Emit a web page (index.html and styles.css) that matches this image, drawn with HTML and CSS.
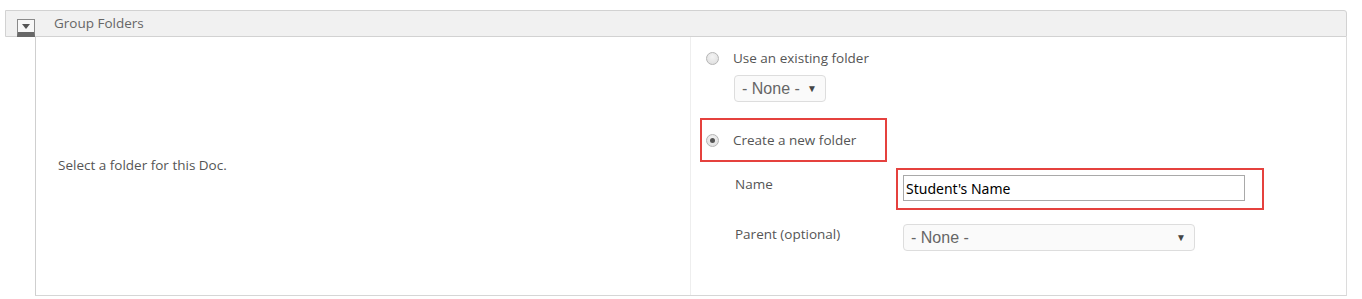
FILE: index.html
```html
<!DOCTYPE html>
<html lang="en">
<head>
    <meta charset="UTF-8">
    <title>Group Folders</title>
    <link rel="stylesheet" href="styles.css">
</head>
<body>
    <div class="panel">
        <div class="panel-head">
            <span class="toggle"><span class="arrow"></span></span>
            Group Folders
        </div>
        <div class="panel-body">
            <div class="field-label">Select a folder for this Doc.</div>
            <div class="field-options">
                <label class="option">
                    <span class="radio"></span>
                    Use an existing folder
                </label>
                <div class="select small">- None - <span class="caret">&#9660;</span></div>

                <label class="option marked">
                    <span class="radio checked"></span>
                    Create a new folder
                </label>

                <div class="new-folder">
                    <div class="sub-label name-label">Name</div>
                    <div class="marked-input">
                        <input type="text" class="text-input" value="Student's Name">
                    </div>
                    <div class="sub-label parent-label">Parent (optional)</div>
                    <div class="select wide">- None - <span class="caret">&#9660;</span></div>
                </div>
            </div>
        </div>
    </div>
</body>
</html>
```

FILE: styles.css
```css
body {
    margin: 0;
    padding: 10px 0 0 5px;
    font-family: 'Open Sans', sans-serif;
    font-size: 13.5px;
    color: #555;
    background-color: white;
}
.panel {
    width: 1342px;
}
.panel-head {
    position: relative;
    height: 25px;
    line-height: 25px;
    padding-left: 48px;
    background-color: #f1f1f1;
    border: 1px solid #d2d2d2;
    border-radius: 0 3px 0 0;
    color: #666;
}
.toggle {
    position: absolute;
    left: 11px;
    top: 8px;
    width: 16px;
    height: 12px;
    background-color: #f8f8f8;
    border: 1px solid #8a8a8a;
    border-bottom: 5px solid #686868;
    display: flex;
    align-items: center;
    justify-content: center;
}
.arrow {
    width: 0;
    height: 0;
    border-left: 4px solid transparent;
    border-right: 4px solid transparent;
    border-top: 5px solid #555;
    margin-top: 1px;
}
.panel-body {
    margin-left: 30px;
    height: 258px;
    border-left: 1px solid #cfcfcf;
    border-right: 1px solid #dcdcdc;
    border-bottom: 1px solid #d6d6d6;
    display: grid;
    grid-template-columns: 654px 1fr;
}
.field-label {
    display: flex;
    align-items: center;
    padding-left: 22px;
    padding-bottom: 3px;
}
.field-options {
    border-left: 1px solid #eeeeee;
    padding: 12px 0 0 15px;
}
.option {
    display: flex;
    align-items: center;
    height: 18px;
    gap: 14px;
}
.radio {
    width: 11px;
    height: 11px;
    border-radius: 50%;
    border: 1px solid #b5b5b5;
    background: radial-gradient(circle at 50% 35%, #f4f4f4 0%, #dcdcdc 100%);
    display: flex;
    align-items: center;
    justify-content: center;
}
.radio.checked::after {
    content: "";
    width: 5px;
    height: 5px;
    border-radius: 50%;
    background-color: #555;
}
.option.marked {
    width: 175px;
    margin: 16px 0 0 -6px;
    padding: 11px 4px;
    border: 2px solid #e5413e;
}
.select {
    display: flex;
    align-items: center;
    justify-content: space-between;
    box-sizing: border-box;
    height: 27px;
    padding: 0 8px 0 7px;
    border: 1px solid #dddddd;
    border-radius: 4px;
    background-color: #fafafa;
    font-family: 'Liberation Sans', Arial, sans-serif;
    font-size: 16px;
    color: #666;
}
.select.small {
    width: 92px;
    margin: 8px 0 0 28px;
}
.select.wide {
    width: 292px;
}
.caret {
    font-size: 10px;
    color: #444;
}
.new-folder {
    display: grid;
    grid-template-columns: 168px auto;
    row-gap: 14px;
    margin: 6px 0 0 29px;
    align-items: start;
}
.sub-label {
    line-height: 18px;
}
.name-label {
    padding-top: 7px;
}
.parent-label {
    padding-top: 1px;
}
.marked-input {
    width: 359px;
    margin-left: -7px;
    padding: 5px 0 7px 5px;
    border: 2px solid #e5413e;
}
.text-input {
    display: block;
    box-sizing: border-box;
    width: 342px;
    height: 26px;
    margin: 0;
    padding: 0 2px;
    border: 1px solid #a9a9a9;
    font-family: 'Noto Sans', sans-serif;
    font-size: 14px;
    color: #000;
}
```
